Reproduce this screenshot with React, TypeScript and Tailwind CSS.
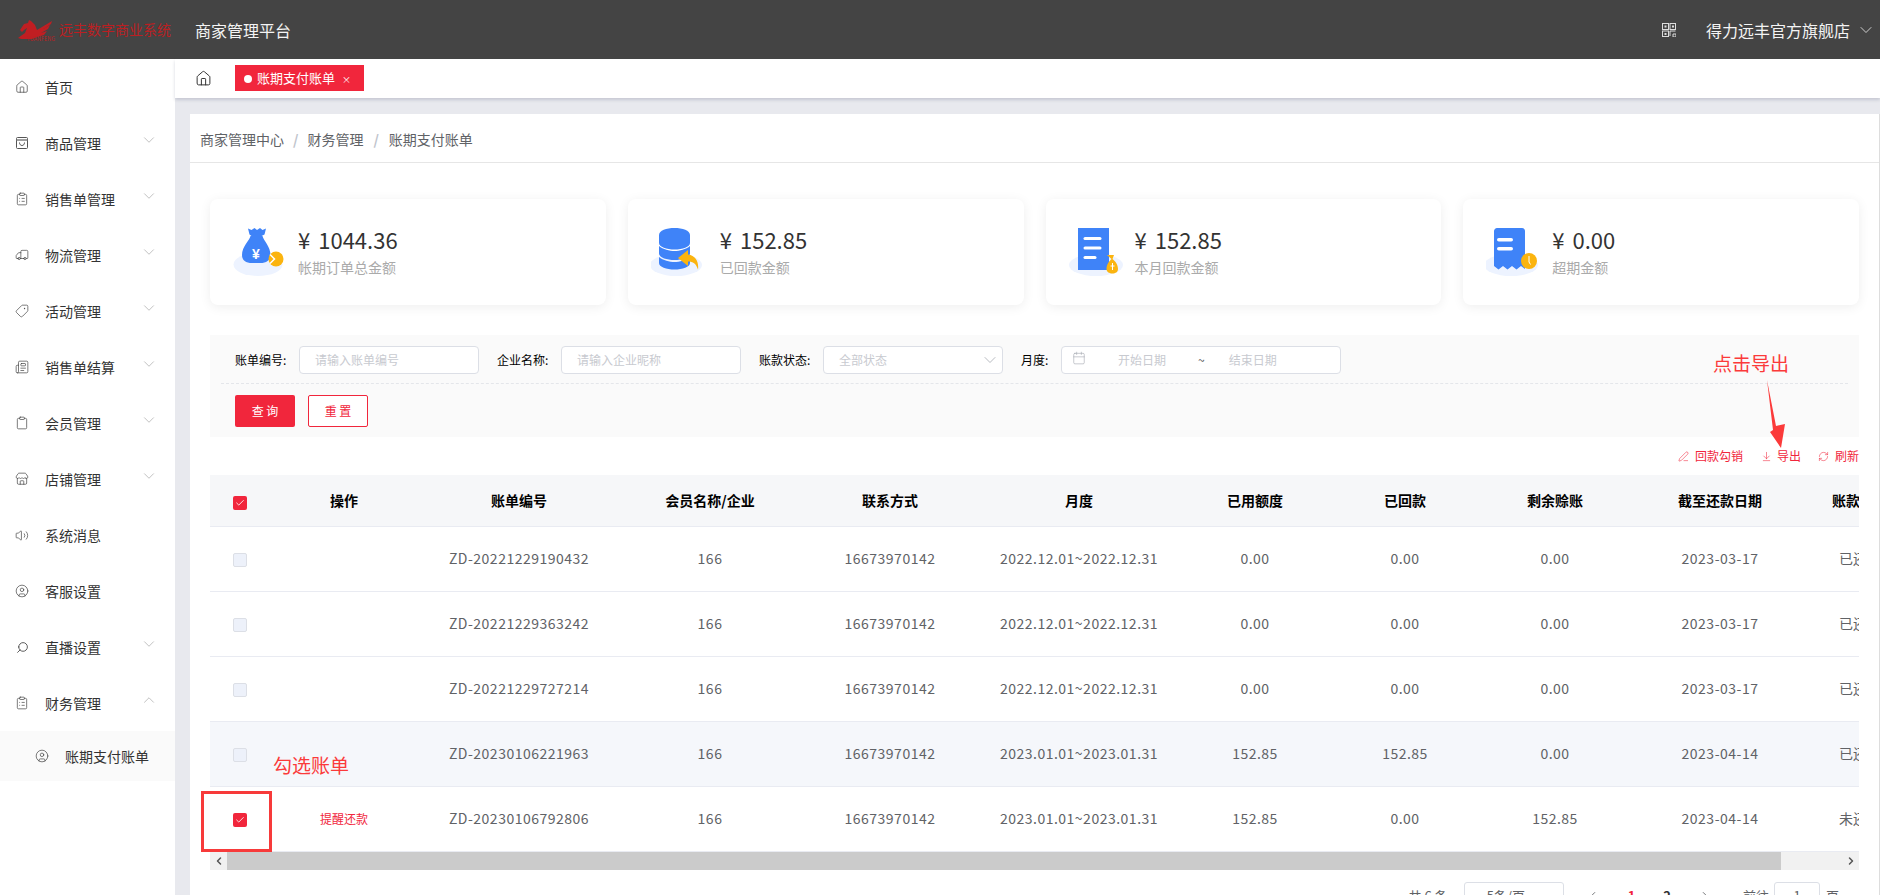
import React from "react";
import { ChevronDown, ChevronUp, ChevronLeft, ChevronRight, Home, ClipboardList, Truck, Tag, Newspaper, Clipboard, Store, Volume2, CircleUser, Search, Calendar, PenLine, ArrowDownToLine, RefreshCw, Check } from "lucide-react";

const font = "font-['Noto_Sans_CJK_SC','Noto_Sans',sans-serif]";

function BagIcon() {
  return (
    <svg viewBox="0 0 110 96" className="w-[55px] h-[48px]">
      <ellipse cx="50" cy="73" rx="49" ry="23" fill="#edf3ff" />
      <path d="M30 1l7 3 6-4 5 4 6-4 5 4 7-3-3 12-6 3H37l-4-3z" fill="#3f83f8" />
      <path d="M35 16h24c2 9 16 21 16 38 0 11-9 16-20 16H38c-12 0-20-5-20-16 0-17 15-29 17-38z" fill="#3f83f8" />
      <text x="46" y="62" textAnchor="middle" fontSize="28" fontWeight="700" fill="#fff" fontFamily="'Liberation Sans',sans-serif">¥</text>
      <circle cx="86" cy="62" r="15" fill="#fbb40f" />
      <path d="M74 53l9 9-9 9" stroke="#fff" strokeWidth="3" fill="none" />
    </svg>
  );
}
function DbIcon() {
  return (
    <svg viewBox="0 0 110 96" className="w-[55px] h-[48px]">
      <ellipse cx="50" cy="74" rx="52" ry="22" fill="#edf3ff" />
      <path d="M16 14c0-9 15-14 31-14s31 5 31 14v16c0 8-15 13-31 13s-31-5-31-13z" fill="#3f83f8" />
      <path d="M16 36c8 7 21 10 31 10s23-3 31-10v15c0 8-15 13-31 13s-31-5-31-13z" fill="#3f83f8" />
      <path d="M16 58c8 7 21 10 31 10s23-3 31-10v12c0 8-15 13-31 13s-31-5-31-13z" fill="#3f83f8" />
      <path d="M54 60l20-16v9c16 2 22 16 20 30-4-12-10-16-20-16v9z" fill="#fbb40f" />
    </svg>
  );
}
function DocIcon() {
  return (
    <svg viewBox="0 0 110 96" className="w-[55px] h-[48px]">
      <ellipse cx="54" cy="74" rx="54" ry="22" fill="#edf3ff" />
      <rect x="18" y="0" width="62" height="84" fill="#3f83f8" />
      <rect x="29" y="18" width="36" height="6" rx="3" fill="#fff" />
      <rect x="29" y="37" width="36" height="6" rx="3" fill="#fff" />
      <rect x="29" y="56" width="26" height="6" rx="3" fill="#fff" />
      <path d="M76 54h14l-3 8c6 5 11 11 11 20 0 6-5 9-11 9s-12-3-12-9c0-9 5-15 10-20z" fill="#fbb40f" />
      <path d="M87 70v14M83 76h8" stroke="#fff" strokeWidth="2" />
    </svg>
  );
}
function ReceiptIcon() {
  return (
    <svg viewBox="0 0 110 96" className="w-[55px] h-[48px]">
      <ellipse cx="50" cy="74" rx="54" ry="22" fill="#edf3ff" />
      <path d="M16 6c0-3 3-6 6-6h50c4 0 6 3 6 6v76l-8-6-9 7-9-7-9 7-9-7-9 7-9-7z" fill="#3f83f8" />
      <rect x="22" y="20" width="32" height="7" rx="3.5" fill="#fff" />
      <rect x="22" y="38" width="32" height="7" rx="3.5" fill="#fff" />
      <circle cx="86" cy="66" r="16" fill="#fbb40f" />
      <path d="M86 56v12l3 5" stroke="#fff" strokeWidth="2" fill="none" />
    </svg>
  );
}
function BagSmile() {
  return (
    <svg viewBox="0 0 14 14" className="w-[14px] h-[14px]" fill="none" stroke="#555" strokeWidth="1">
      <rect x="1.5" y="1.5" width="11" height="11" rx="1" />
      <path d="M1.5 4h11" strokeWidth="1.6" stroke="#888" />
      <path d="M4.5 6.5c0 4 5 4 5 0" />
    </svg>
  );
}
function Mic() {
  return <Search size={13} strokeWidth={1.6} color="#444" className="-scale-x-100" />;
}

const menu: { label: string; icon: React.ReactNode; arrow?: "down" | "up" }[] = [
  { label: "首页", icon: <Home size={14} strokeWidth={1.2} color="#444" /> },
  { label: "商品管理", icon: <BagSmile />, arrow: "down" },
  { label: "销售单管理", icon: <ClipboardList size={14} strokeWidth={1.2} color="#444" />, arrow: "down" },
  { label: "物流管理", icon: <Truck size={14} strokeWidth={1.2} color="#444" className="-scale-x-100" />, arrow: "down" },
  { label: "活动管理", icon: <Tag size={14} strokeWidth={1.2} color="#444" className="rotate-90" />, arrow: "down" },
  { label: "销售单结算", icon: <Newspaper size={14} strokeWidth={1.2} color="#444" />, arrow: "down" },
  { label: "会员管理", icon: <Clipboard size={14} strokeWidth={1.2} color="#444" />, arrow: "down" },
  { label: "店铺管理", icon: <Store size={14} strokeWidth={1.2} color="#444" />, arrow: "down" },
  { label: "系统消息", icon: <Volume2 size={15} strokeWidth={1.2} color="#444" /> },
  { label: "客服设置", icon: <CircleUser size={14} strokeWidth={1.2} color="#444" /> },
  { label: "直播设置", icon: <Mic />, arrow: "down" },
  { label: "财务管理", icon: <ClipboardList size={14} strokeWidth={1.2} color="#444" />, arrow: "up" },
];

const stats = [
  { icon: <BagIcon />, value: "1044.36", label: "帐期订单总金额", ml: "ml-[10px]" },
  { icon: <DbIcon />, value: "152.85", label: "已回款金额", ml: "ml-[14px]" },
  { icon: <DocIcon />, value: "152.85", label: "本月回款金额", ml: "ml-[11px]" },
  { icon: <ReceiptIcon />, value: "0.00", label: "超期金额", ml: "ml-[11px]" },
];

const heads = ["操作", "账单编号", "会员名称/企业", "联系方式", "月度", "已用额度", "已回款", "剩余赊账", "截至还款日期", "账款状态"];

const rows = [
  { id: "ZD-20221229190432", month: "2022.12.01~2022.12.31", used: "0.00", back: "0.00", left: "0.00", date: "2023-03-17", st: "已还款" },
  { id: "ZD-20221229363242", month: "2022.12.01~2022.12.31", used: "0.00", back: "0.00", left: "0.00", date: "2023-03-17", st: "已还款" },
  { id: "ZD-20221229727214", month: "2022.12.01~2022.12.31", used: "0.00", back: "0.00", left: "0.00", date: "2023-03-17", st: "已还款" },
  { id: "ZD-20230106221963", month: "2023.01.01~2023.01.31", used: "152.85", back: "152.85", left: "0.00", date: "2023-04-14", st: "已还款", hover: true },
  { id: "ZD-20230106792806", month: "2023.01.01~2023.01.31", used: "152.85", back: "0.00", left: "152.85", date: "2023-04-14", st: "未还款", checked: true },
];

function Box({ checked }: { checked?: boolean }) {
  return checked ? (
    <span className="inline-flex w-[14px] h-[14px] rounded-[2px] bg-[#f1263c] items-center justify-center align-middle">
      <Check size={10} strokeWidth={2} color="#fff" />
    </span>
  ) : (
    <span className="inline-block w-[14px] h-[14px] rounded-[2px] bg-[#edf1fa] border border-[#dcdfe6] align-middle" />
  );
}

function Field({ label, placeholder, select }: { label: string; placeholder: string; select?: boolean }) {
  return (
    <div className="flex items-center">
      <span className="text-[12px] text-black w-[64px]">{label}</span>
      <div className="w-[180px] h-[28px] border border-[#dcdfe6] rounded-[4px] bg-white flex items-center justify-between pl-[15px] pr-[2px] text-[12px] text-[#c8cad0]">
        <span>{placeholder}</span>
        {select && <ChevronDown size={20} strokeWidth={0.9} color="#a0a4ac" />}
      </div>
    </div>
  );
}

export default function App() {
  return (
    <div className={`${font} w-[1880px] h-[895px] overflow-hidden flex flex-col bg-[#e8e9ee]`}>
      <header className="h-[59px] shrink-0 bg-[#444444] flex items-center text-white">
        <div className="w-[195px] pl-[18px] flex items-center shrink-0">
          <div className="w-[38px] relative h-[26px]">
            <svg viewBox="0 0 38 22" className="w-[38px] h-[22px]" fill="#c01e22">
              <path d="M0 21l7-5 2-5-3 2-2 2-2-2 4-6 4-1 1-3 2 1 4 4 2 5 15-9-1 3-9 6 8-5-2 4-7 4 6-2-3 4-7 2-5 2-7 1z" />
            </svg>
            <span className="absolute left-[9px] top-[19px] text-[5.5px] leading-[7px] text-[#bb1f22] whitespace-nowrap">YUANFENG</span>
          </div>
          <span className="ml-[3px] text-[14px] text-[#bb1f22] whitespace-nowrap">远丰数字商业系统</span>
        </div>
        <span className="text-[16px] text-[#f4f4f4]">商家管理平台</span>
        <div className="ml-auto flex items-center pr-[4px]">
          <svg viewBox="0 0 14 14" className="w-[14px] h-[14px]" fill="none" stroke="#ddd" strokeWidth="1">
            <rect x="0.5" y="0.5" width="6" height="6" />
            <rect x="8" y="0.5" width="5.5" height="6" />
            <rect x="0.5" y="8" width="6" height="5.5" />
            <rect x="2.5" y="2.5" width="2" height="2" fill="#ddd" stroke="none" />
            <rect x="10" y="2.5" width="2" height="2" fill="#ddd" stroke="none" />
            <rect x="2.5" y="10" width="2" height="2" fill="#ddd" stroke="none" />
            <path d="M8 8h5.5M8 8v5M11 11h3v3h-3z" />
          </svg>
          <span className="ml-[30px] text-[16px] text-[#f4f4f4]">得力远丰官方旗舰店</span>
          <ChevronDown size={20} strokeWidth={1} color="#e8e8e8" className="ml-[6px]" />
        </div>
      </header>
      <div className="flex flex-1 min-h-0">
        <aside className="w-[175px] shrink-0 bg-white">
          {menu.map((m) => (
            <div key={m.label} className="h-[56px] flex items-center pl-[15px] pr-[17px] text-[14px] text-[#333]">
              <span className="w-[14px] h-[14px] flex items-center justify-center">{m.icon}</span>
              <span className="ml-[16px] flex-1">{m.label}</span>
              {m.arrow === "down" && <ChevronDown size={18} strokeWidth={0.8} color="#999" className="-mt-[6px]" />}
              {m.arrow === "up" && <ChevronUp size={18} strokeWidth={0.8} color="#999" className="-mt-[6px]" />}
            </div>
          ))}
          <div className="h-[50px] bg-[#fafafa] flex items-center pl-[35px] text-[14px] text-[#333]">
            <CircleUser size={14} strokeWidth={1.2} color="#444" />
            <span className="ml-[16px]">账期支付账单</span>
          </div>
        </aside>
        <main className="flex-1 min-w-0 flex flex-col">
          <div className="h-[39px] shrink-0 bg-white shadow-[0_2px_3px_rgba(120,125,150,0.3)] flex pt-[6px] relative">
            <Home size={17} strokeWidth={1.4} color="#333" className="ml-[20px] mt-[5px]" />
            <div className="ml-[23px] w-[129px] h-[26px] bg-[#f1263c] text-white flex items-center pl-[9px] text-[13px]">
              <span className="w-[8px] h-[8px] rounded-full bg-white mt-[2px]" />
              <span className="ml-[5px]">账期支付账单</span>
              <span className="ml-[7px] text-[9px] mt-[3px] leading-none">×</span>
            </div>
          </div>
          <div className="flex-1 min-h-0 pt-[16px] pl-[15px]">
            <div className="bg-white h-[800px] border-r border-[#ddd]">
              <div className="h-[49px] border-b border-[#e6e6e6] flex items-center pl-[10px] pt-[2px] text-[14px] text-[#606266]">
                <span>商家管理中心</span>
                <span className="mx-[9px] text-[#c0c4cc] font-bold">/</span>
                <span>财务管理</span>
                <span className="mx-[10px] text-[#c0c4cc] font-bold">/</span>
                <span>账期支付账单</span>
              </div>
              <div className="px-[20px]">
                <div className="pt-[36px] grid grid-cols-4 gap-[22px]">
                  {stats.map((s) => (
                    <div key={s.label} className="h-[106px] rounded-lg bg-white shadow-[0_2px_12px_rgba(0,0,0,0.07)] flex items-center pl-[23px]">
                      {s.icon}
                      <div className={`${s.ml} flex flex-col -mt-[2px]`}>
                        <span className="text-[22px] leading-[30px] text-[#333]">¥<span className="ml-[8px]">{s.value}</span></span>
                        <span className="text-[14px] leading-[22px] text-[#aaa] mt-[2px]">{s.label}</span>
                      </div>
                    </div>
                  ))}
                </div>
                <div className="mt-[30px] h-[102px] bg-[#fafafa] relative">
                  <div className="h-[49px] mx-[11px] border-b border-dashed border-[#e4e6ea] flex items-center pl-[14px] pt-[1px] gap-[18px]">
                    <Field label="账单编号:" placeholder="请输入账单编号" />
                    <Field label="企业名称:" placeholder="请输入企业昵称" />
                    <Field label="账款状态:" placeholder="全部状态" select />
                    <div className="flex items-center">
                      <span className="text-[12px] text-black w-[40px]">月度:</span>
                      <div className="w-[280px] h-[28px] border border-[#dcdfe6] rounded-[4px] bg-white flex items-center pl-[10px] text-[12px] text-[#c8cad0]">
                        <Calendar size={14} strokeWidth={1} color="#a0a4ac" className="-mt-[3px]" />
                        <span className="ml-[32px]">开始日期</span>
                        <span className="ml-[32px] text-[#555]">~</span>
                        <span className="ml-[24px]">结束日期</span>
                      </div>
                    </div>
                  </div>
                  <div className="flex gap-[13px] pl-[25px] pt-[11px]">
                    <button className="w-[60px] h-[32px] rounded-[2px] bg-[#f1263c] text-white text-[12px]">查 询</button>
                    <button className="w-[60px] h-[32px] rounded-[2px] bg-white border border-[#f1263c] text-[#f1263c] text-[12px]">重 置</button>
                  </div>
                  <span className="absolute left-[1503px] top-[14px] text-[19px] text-[#fb3a3a] whitespace-nowrap">点击导出</span>
                  <svg viewBox="0 0 32 70" className="absolute left-[1546px] top-[44px] w-[32px] h-[70px]">
                    <path d="M11 1l9 46 9-2-4 24-11-16 3-2z" fill="#fb3a3a" />
                  </svg>
                </div>
                <div className="h-[38px] flex items-center justify-end text-[12px] text-[#f1263c]">
                  <PenLine size={11} strokeWidth={1.2} />
                  <span className="ml-[6px]">回款勾销</span>
                  <ArrowDownToLine size={11} strokeWidth={1.2} className="ml-[18px]" />
                  <span className="ml-[5px]">导出</span>
                  <RefreshCw size={11} strokeWidth={1.2} className="ml-[17px]" />
                  <span className="ml-[6px]">刷新</span>
                </div>
                <div className="relative">
                  <div className="overflow-hidden">
                    <table className="table-fixed w-[1702px] border-collapse">
                      <colgroup>
                        <col className="w-[60px]" />
                        <col className="w-[148px]" />
                        <col className="w-[202px]" />
                        <col className="w-[180px]" />
                        <col className="w-[180px]" />
                        <col className="w-[198px]" />
                        <col className="w-[154px]" />
                        <col className="w-[146px]" />
                        <col className="w-[154px]" />
                        <col className="w-[176px]" />
                        <col className="w-[104px]" />
                      </colgroup>
                      <thead>
                        <tr className="h-[51px] bg-[#f6f7f9] border-b border-[#e9ebf2]">
                          <th className="text-center font-normal"><Box checked /></th>
                          {heads.map((h) => (
                            <th key={h} className="text-center text-[14px] font-bold text-black">{h}</th>
                          ))}
                        </tr>
                      </thead>
                      <tbody>
                        {rows.map((r) => (
                          <tr key={r.id} className={`h-[65px] border-b border-[#e9ebf2] text-center text-[14px] tracking-[0.5px] text-[#606266] ${r.hover ? "bg-[#f5f7fb]" : "bg-white"}`}>
                            <td><Box checked={r.checked} /></td>
                            <td className="text-[12px] tracking-normal text-[#f1263c]">{r.checked ? "提醒还款" : ""}</td>
                            <td>{r.id}</td>
                            <td>166</td>
                            <td>16673970142</td>
                            <td>{r.month}</td>
                            <td>{r.used}</td>
                            <td>{r.back}</td>
                            <td>{r.left}</td>
                            <td>{r.date}</td>
                            <td className="tracking-normal">{r.st}</td>
                          </tr>
                        ))}
                      </tbody>
                    </table>
                  </div>
                  <div className="h-[18px] flex bg-[#f1f1f1]">
                    <span className="w-[17px] flex items-center justify-center"><ChevronLeft size={12} strokeWidth={3} color="#555" /></span>
                    <span className="w-[1554px] bg-[#cbcbcb]" />
                    <span className="flex-1 flex items-center justify-end pr-[2px]"><ChevronRight size={12} strokeWidth={3} color="#555" /></span>
                  </div>
                  <span className="absolute left-[63px] top-[276px] text-[19px] text-[#fb3a3a] whitespace-nowrap">勾选账单</span>
                  <div className="absolute left-[-9px] top-[316px] w-[71px] h-[61px] border-[3px] border-[#f73a3a]" />
                </div>
                <div className="mt-[12px] h-[28px] flex items-center justify-end pr-[20px] text-[13px] text-[#606266]">
                  <span>共 6 条</span>
                  <div className="ml-[16px] w-[100px] h-[28px] border border-[#dcdfe6] rounded-[3px] pl-[22px] flex items-center">5条/页</div>
                  <ChevronLeft size={14} strokeWidth={1.5} className="ml-[22px]" />
                  <span className="ml-[28px] font-bold text-[#f1263c]">1</span>
                  <span className="ml-[28px] font-bold text-[#303133]">2</span>
                  <ChevronRight size={14} strokeWidth={1.5} className="ml-[27px]" />
                  <span className="ml-[31px]">前往</span>
                  <div className="ml-[5px] w-[46px] h-[28px] border border-[#dcdfe6] rounded-[3px] flex items-center justify-center">1</div>
                  <span className="ml-[6px]">页</span>
                </div>
              </div>
            </div>
          </div>
        </main>
      </div>
    </div>
  );
}
